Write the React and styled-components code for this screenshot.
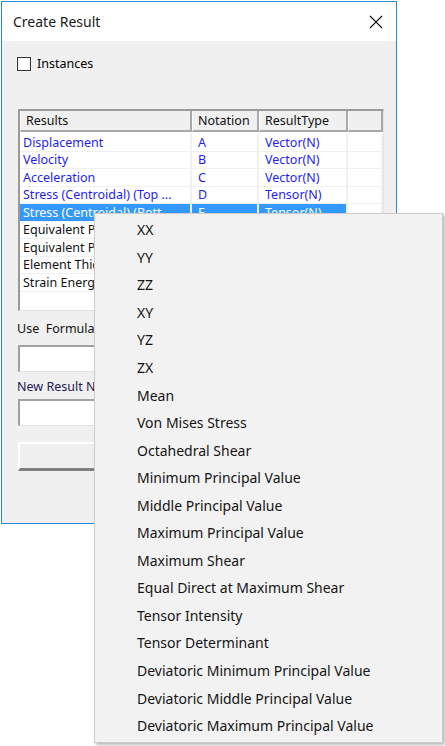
import React from "react";
import styled, { createGlobalStyle } from "styled-components";

const Global = createGlobalStyle`
  html, body { margin: 0; padding: 0; background: #ffffff; }
  body { font-family: "Noto Sans", "Liberation Sans", sans-serif; }
  * { box-sizing: border-box; }
`;

const Page = styled.div`
  position: relative;
  width: 445px;
  height: 746px;
  overflow: hidden;
  background: #ffffff;
`;

const Dialog = styled.div`
  margin: 1px 0 0 1px;
  width: 396px;
  height: 523px;
  border: 1px solid #2b88d8;
  display: flex;
  flex-direction: column;
  background: #f0f0f0;
`;

const TitleBar = styled.div`
  height: 39px;
  background: #ffffff;
  display: flex;
  align-items: center;
  justify-content: space-between;
  padding: 0 11px 0 11px;
  font-size: 14px;
  color: #1a1a1a;
`;

const Close = styled.div`
  width: 14px;
  height: 14px;
  margin-right: 2px;
  display: flex;
`;

const Body = styled.div`
  flex: 1;
  padding: 15px 0 0 15px;
  display: flex;
  flex-direction: column;
  font-size: 12px;
  color: #000;
`;

const CheckRow = styled.label`
  display: flex;
  align-items: center;
  gap: 6px;
  height: 15px;
  font-size: 12.5px;
`;

const Box = styled.span`
  width: 14px;
  height: 14px;
  background: #fff;
  border: 1px solid #333;
`;

const Table = styled.div`
  margin-top: 38px;
  margin-left: 1px;
  width: 366px;
  height: 202px;
  background: #fff;
  border-top: 2px solid #9a9a9a;
  border-left: 2px solid #9a9a9a;
  border-right: 1px solid #e3e3e3;
  border-bottom: 1px solid #e3e3e3;
  overflow: hidden;
`;

const Grid = styled.div`
  display: grid;
  grid-template-columns: 172px 67px 89px 1fr;
`;

const HeadCell = styled.div`
  height: 21px;
  background: #f0f0f0;
  border-right: 2px solid #a8a8a8;
  border-bottom: 2px solid #a8a8a8;
  border-left: 1px solid #ffffff;
  display: flex;
  align-items: center;
  padding-left: 5px;
  font-size: 12.5px;
  color: #111;
  &:last-child { border-right: none; }
`;

const Spacer = styled.div`
  grid-column: 1 / -1;
  height: 2px;
`;

const Cell = styled.div`
  height: 17.5px;
  display: flex;
  align-items: center;
  padding-left: ${p => (p.$first ? 3 : 6)}px;
  border-right: 2px solid #f0f0f0;
  border-bottom: 1px solid #f0f0f0;
  font-size: 12.5px;
  white-space: nowrap;
  overflow: hidden;
  color: ${p => (p.$sel ? "#ffffff" : p.$blue ? "#1e1ef0" : "#111")};
  background: ${p => (p.$sel ? "#3399ff" : "#fff")};
`;

const Label = styled.div`
  margin-top: ${p => p.$mt}px;
  height: 16px;
  display: flex;
  align-items: center;
  font-size: 12.5px;
  color: ${p => p.$color || "#111"};
  white-space: pre;
`;

const Input = styled.div`
  margin-top: ${p => p.$mt}px;
  margin-left: 1px;
  width: 365px;
  height: 27px;
  background: #fff;
  border-top: 2px solid #a0a0a0;
  border-left: 2px solid #a0a0a0;
  border-right: 1px solid #e3e3e3;
  border-bottom: 1px solid #e3e3e3;
`;

const Button = styled.div`
  margin-top: 16px;
  margin-left: 1px;
  width: 365px;
  height: 29px;
  background: #efefef;
  border-top: 2px solid #ffffff;
  border-left: 2px solid #ffffff;
  border-bottom: 3px solid #7f7f7f;
  border-right: 2px solid #7f7f7f;
`;

const Menu = styled.div`
  position: absolute;
  left: 94px;
  top: 213px;
  width: 349px;
  height: 530px;
  background: #f2f2f2;
  border: 1px solid #cccccc;
  box-shadow: 2px 2px 3px rgba(0, 0, 0, 0.28);
  padding-top: 2px;
  display: flex;
  flex-direction: column;
`;

const Item = styled.div`
  height: 27.55px;
  flex: none;
  display: flex;
  align-items: center;
  padding-left: 42px;
  font-size: 14px;
  color: #141414;
  white-space: nowrap;
`;

const rows = [
  ["Displacement", "A", "Vector(N)", true],
  ["Velocity", "B", "Vector(N)", true],
  ["Acceleration", "C", "Vector(N)", true],
  ["Stress (Centroidal) (Top ...", "D", "Tensor(N)", true],
  ["Stress (Centroidal) (Bott...", "E", "Tensor(N)", true, true],
  ["Equivalent Plastic Strain", "", "", false],
  ["Equivalent Plastic Stress", "", "", false],
  ["Element Thickness", "", "", false],
  ["Strain Energy Density", "", "", false],
];

const items = [
  "XX", "YY", "ZZ", "XY", "YZ", "ZX", "Mean", "Von Mises Stress",
  "Octahedral Shear", "Minimum Principal Value", "Middle Principal Value",
  "Maximum Principal Value", "Maximum Shear", "Equal Direct at Maximum Shear",
  "Tensor Intensity", "Tensor Determinant", "Deviatoric Minimum Principal Value",
  "Deviatoric Middle Principal Value", "Deviatoric Maximum Principal Value",
];

export default function App() {
  return (
    <Page>
      <Global />
      <Dialog>
        <TitleBar>
          <span>Create Result</span>
          <Close>
            <svg width="14" height="14" viewBox="0 0 14 14">
              <path d="M1 1 L13 13 M13 1 L1 13" stroke="#111" strokeWidth="1.1" />
            </svg>
          </Close>
        </TitleBar>
        <Body>
          <CheckRow>
            <Box />
            Instances
          </CheckRow>
          <Table>
            <Grid>
              <HeadCell>Results</HeadCell>
              <HeadCell>Notation</HeadCell>
              <HeadCell>ResultType</HeadCell>
              <HeadCell />
              <Spacer />
              {rows.map(([a, b, c, blue, sel]) => (
                <React.Fragment key={a}>
                  <Cell $first $blue={blue} $sel={sel}>{a}</Cell>
                  <Cell $blue={blue} $sel={sel}>{b}</Cell>
                  <Cell $blue={blue} $sel={sel}>{c}</Cell>
                  <Cell />
                </React.Fragment>
              ))}
            </Grid>
          </Table>
          <Label $mt={9}>{"Use  Formula"}</Label>
          <Input $mt={9} />
          <Label $mt={6} $color="#1c1c50">New Result Name</Label>
          <Input $mt={5} />
          <Button />
        </Body>
      </Dialog>
      <Menu>
        {items.map(t => (
          <Item key={t}>{t}</Item>
        ))}
      </Menu>
    </Page>
  );
}
